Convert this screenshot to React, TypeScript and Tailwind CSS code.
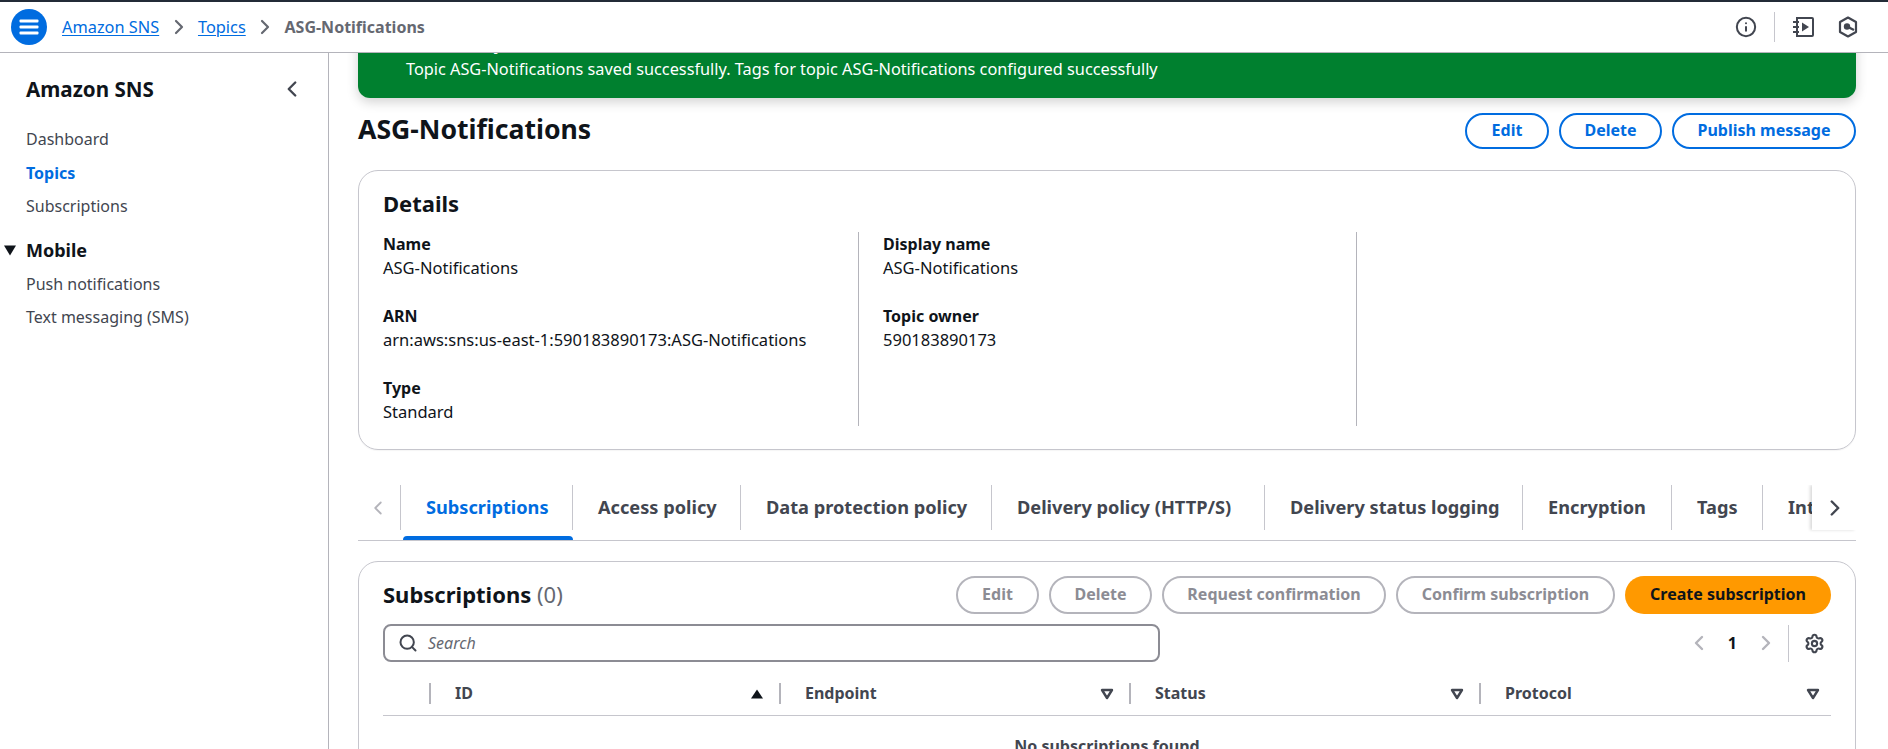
import React from "react";
import { ChevronRight, ChevronLeft, Search, Settings, Info } from "lucide-react";

function OutlineBtn({ w, children }: { w: string; children: React.ReactNode }) {
  return (
    <button className={`${w} h-9 pb-[2px] rounded-full border-2 border-[#006ce0] text-[#006ce0] font-bold text-[16px] flex items-center justify-center`}>
      {children}
    </button>
  );
}

function DisabledBtn({ w, children }: { w: string; children: React.ReactNode }) {
  return (
    <button className={`${w} h-[38px] pb-[2px] rounded-full border-2 border-[#b4b4bb] text-[#8c8c94] font-bold text-[16px] flex items-center justify-center`}>
      {children}
    </button>
  );
}

function Field({ label, value, className }: { label: string; value: string; className?: string }) {
  return (
    <div className={className}>
      <div className="font-bold text-[16px] leading-6 text-[#0f141a]">{label}</div>
      <div className="text-[16.5px] leading-6 text-[#0f141a]">{value}</div>
    </div>
  );
}

function Tab({ w, children, active, last }: { w: string; children: React.ReactNode; active?: boolean; last?: boolean }) {
  return (
    <div className={`${w} shrink-0 relative h-[55px] flex items-start`}>
      <div className={`h-[45px] w-full flex items-center pl-[25px] whitespace-nowrap font-bold text-[18.2px] ${last ? "" : "border-r border-[#c6c6cd]"} ${active ? "text-[#006ce0]" : "text-[#424650]"}`}>
        {children}
      </div>
      {active && <div className="absolute left-[2px] right-0 bottom-0 h-1 bg-[#006ce0] rounded-t-sm" />}
    </div>
  );
}

function Col({ w, label, sort, pr }: { w: string; label: string; sort: "asc" | "none"; pr: string }) {
  return (
    <div className={`${w} ${pr} h-[21px] flex items-center justify-between pl-6 border-l-2 border-[#b4b4bb]`}>
      <span className="font-bold text-[16px] pb-[2px] text-[#424650]">{label}</span>
      {sort === "asc" ? (
        <svg width="14" height="10" viewBox="0 0 14 10"><path d="M7 0.5 L13 9.5 L1 9.5 Z" fill="#0f141a" /></svg>
      ) : (
        <svg width="14" height="12" viewBox="0 0 14 12"><path d="M2 2 H12 L7 10 Z" fill="none" stroke="#424650" strokeWidth="2.4" strokeLinejoin="round" /></svg>
      )}
    </div>
  );
}

export default function App() {
  return (
    <div className="w-[1888px] h-[749px] overflow-hidden bg-white flex flex-col font-['Noto_Sans',sans-serif] text-[#0f141a]">
      <div className="h-[2px] bg-[#232b37] shrink-0" />
      <header className="h-[51px] shrink-0 border-b border-[#b4b4bb] flex items-center pl-[11px] pr-[32px] relative z-10 bg-white">
        <div className="w-9 h-9 rounded-full bg-[#006ce0] flex items-center justify-center">
          <svg width="20" height="16" viewBox="0 0 20 16" fill="white">
            <rect x="0.5" y="0.5" width="19" height="3" rx="1" />
            <rect x="0.5" y="6.5" width="19" height="3" rx="1" />
            <rect x="0.5" y="12.5" width="19" height="3" rx="1" />
          </svg>
        </div>
        <nav className="flex items-center ml-[15px] text-[16.35px]">
          <a className="text-[#006ce0] underline underline-offset-2">Amazon SNS</a>
          <ChevronRight size={24} color="#656871" strokeWidth={2.2} className="mx-[7.4px]" />
          <a className="text-[#006ce0] underline underline-offset-2">Topics</a>
          <ChevronRight size={24} color="#656871" strokeWidth={2.2} className="mx-[7.4px]" />
          <span className="font-bold text-[16px] text-[#656871]">ASG-Notifications</span>
        </nav>
        <div className="ml-auto flex items-center">
          <Info size={22} color="#424650" strokeWidth={2.2} />
          <div className="w-px h-[30px] bg-[#c6c6cd] ml-[17px] mr-[18px]" />
          <svg width="22" height="22" viewBox="0 0 22 22" fill="none" stroke="#424650" strokeWidth="2">
            <path d="M4 2 H19 a1 1 0 0 1 1 1 V19 a1 1 0 0 1 -1 1 H4 V2 Z" />
            <path d="M0 6 H6 M0 11 H6 M0 16 H6" />
            <path d="M9 6.5 L16 11 L9 15.5 Z" fill="#424650" stroke="none" />
          </svg>
          <svg className="ml-[23px] mr-[-2px]" width="20" height="22" viewBox="0 0 20 22" fill="none" stroke="#424650" strokeLinejoin="round">
            <path d="M10 1.5 L18 6 V16 L10 20.5 L2 16 V6 Z" strokeWidth="2.2" />
            <circle cx="9" cy="10.5" r="3.2" fill="#424650" stroke="none" />
            <path d="M9 10.5 L16 14" strokeWidth="2.4" />
          </svg>
        </div>
      </header>

      <div className="flex flex-1 min-h-0">
        <aside className="w-[329px] shrink-0 border-r border-[#b4b4bb] text-[16px] text-[#424650] relative">
          <div className="flex items-center justify-between pl-[26px] pr-[23px] pt-[21px] h-[51px]">
            <span className="font-bold text-[20.6px] text-[#0f141a]">Amazon SNS</span>
            <ChevronLeft size={26} color="#424650" strokeWidth={2.2} />
          </div>
          <ul className="pl-[26px] mt-[18px] flex flex-col">
            <li className="h-[34px] flex items-center">Dashboard</li>
            <li className="h-[33px] flex items-center font-bold text-[#006ce0]">Topics</li>
            <li className="h-[34px] flex items-center">Subscriptions</li>
          </ul>
          <div className="flex items-center mt-[11px] h-[33px] pl-[3px]">
            <svg width="14" height="11" viewBox="0 0 14 11"><path d="M1 0.5 H13 L7 10.5 Z" fill="#0f141a" /></svg>
            <span className="font-bold text-[18px] text-[#0f141a] ml-[9px]">Mobile</span>
          </div>
          <ul className="pl-[26px] flex flex-col">
            <li className="h-[33px] flex items-center">Push notifications</li>
            <li className="h-[34px] flex items-center">Text messaging (SMS)</li>
          </ul>
        </aside>

        <main className="flex-1 min-w-0 overflow-hidden pl-[29px] pr-[28px]">
          <div className="w-[1498px]">
            <div className="-mt-[35px] h-[80px] bg-[#00802f] rounded-xl shadow-[0_4px_12px_rgba(0,0,0,0.18)] text-white text-[16.3px] relative pl-[48px] pt-[14px] leading-6">
              <svg className="absolute left-[20px] top-[17px]" width="16" height="16" viewBox="0 0 16 16" fill="none" stroke="white" strokeWidth="2"><circle cx="8" cy="8" r="7" /><path d="M4.5 8 L7 10.5 L11.5 5.5" /></svg>
              <div className="font-bold text-[16px] h-[25px]">Successfully</div>
              <div>Topic ASG-Notifications saved successfully. Tags for topic ASG-Notifications configured successfully</div>
            </div>

            <div className="flex items-center justify-between mt-[15px] h-9">
              <h1 className="font-bold text-[26.6px] pb-[2px] text-[#0f141a]">ASG-Notifications</h1>
              <div className="flex gap-[10px]">
                <OutlineBtn w="w-[84px]">Edit</OutlineBtn>
                <OutlineBtn w="w-[103px]">Delete</OutlineBtn>
                <OutlineBtn w="w-[184px]">Publish message</OutlineBtn>
              </div>
            </div>

            <section className="mt-[21px] h-[280px] border border-[#c6c6cd] rounded-[20px] pl-[24px] pt-[17px] shadow-[0_1px_1px_rgba(0,0,0,0.04)]">
              <h2 className="font-bold text-[22px] leading-[30px]">Details</h2>
              <div className="flex mt-[14px] h-[194px]">
                <div className="w-[476px] border-r border-[#b4b4bb] flex flex-col gap-6">
                  <Field label="Name" value="ASG-Notifications" />
                  <Field label="ARN" value="arn:aws:sns:us-east-1:590183890173:ASG-Notifications" />
                  <Field label="Type" value="Standard" />
                </div>
                <div className="w-[498px] border-r border-[#b4b4bb] pl-6 flex flex-col gap-6">
                  <Field label="Display name" value="ASG-Notifications" />
                  <Field label="Topic owner" value="590183890173" />
                </div>
              </div>
            </section>

            <div className="mt-[35px] h-[56px] border-b border-[#c6c6cd] flex relative overflow-hidden">
              <div className="w-[43px] h-[45px] shrink-0 flex items-center pl-[9px] border-r border-[#c6c6cd]">
                <ChevronLeft size={22} color="#b4b4bb" strokeWidth={2} />
              </div>
              <Tab w="w-[172px]" active>Subscriptions</Tab>
              <Tab w="w-[168px]">Access policy</Tab>
              <Tab w="w-[251px]">Data protection policy</Tab>
              <Tab w="w-[273px]">Delivery policy (HTTP/S)</Tab>
              <Tab w="w-[258px]">Delivery status logging</Tab>
              <Tab w="w-[149px]">Encryption</Tab>
              <Tab w="w-[91px]">Tags</Tab>
              <Tab w="w-[100px]" last>Integrations</Tab>
              <div className="absolute right-0 top-0 h-[45px] w-[44px] bg-white flex items-center pl-[10px] shadow-[-2px_0_3px_rgba(0,0,0,0.15)]">
                <ChevronRight size={26} color="#424650" strokeWidth={2.2} />
              </div>
            </div>

            <section className="mt-5 h-[300px] border border-[#c6c6cd] rounded-[20px] pl-[24px] pr-[24px] pt-[14px]">
              <div className="flex items-center justify-between h-[38px]">
                <h2 className="font-bold text-[22px] pb-[2px]">Subscriptions <span className="font-normal text-[#656871]">(0)</span></h2>
                <div className="flex gap-[10px]">
                  <DisabledBtn w="w-[83px]">Edit</DisabledBtn>
                  <DisabledBtn w="w-[103px]">Delete</DisabledBtn>
                  <DisabledBtn w="w-[224px]">Request confirmation</DisabledBtn>
                  <DisabledBtn w="w-[219px]">Confirm subscription</DisabledBtn>
                  <button className="w-[206px] h-[38px] pb-[2px] rounded-full bg-[#ff9900] text-[#0f141a] font-bold text-[16px] flex items-center justify-center">Create subscription</button>
                </div>
              </div>
              <div className="flex items-center justify-between mt-[10px] h-[38px]">
                <div className="w-[777px] h-[38px] border-2 border-[#8c8c94] rounded-lg flex items-center pl-[13px]">
                  <Search size={20} color="#424650" strokeWidth={2.4} />
                  <span className="ml-[10px] italic text-[16px] text-[#656871]">Search</span>
                </div>
                <div className="flex items-center">
                  <ChevronLeft size={24} color="#b4b4bb" strokeWidth={2.4} />
                  <span className="font-bold text-[16px] mx-[17px]">1</span>
                  <ChevronRight size={24} color="#b4b4bb" strokeWidth={2.4} />
                  <div className="w-px h-[37px] bg-[#c6c6cd] ml-[10px] mr-[15px]" />
                  <Settings size={21} color="#424650" strokeWidth={2.4} />
                  <div className="w-[6px]" />
                </div>
              </div>
              <div className="mt-[11px] h-[43px] border-b border-[#c6c6cd] flex items-start pl-[46px] pt-[10px]">
                <Col w="w-[350px]" label="ID" sort="asc" pr="pr-[15px]" />
                <Col w="w-[350px]" label="Endpoint" sort="none" pr="pr-[15px]" />
                <Col w="w-[350px]" label="Status" sort="none" pr="pr-[15px]" />
                <Col w="w-[350px]" label="Protocol" sort="none" pr="pr-[9px]" />
              </div>
              <div className="text-center font-bold text-[16px] text-[#424650] mt-[18px]">No subscriptions found</div>
            </section>
          </div>
        </main>
      </div>
    </div>
  );
}
